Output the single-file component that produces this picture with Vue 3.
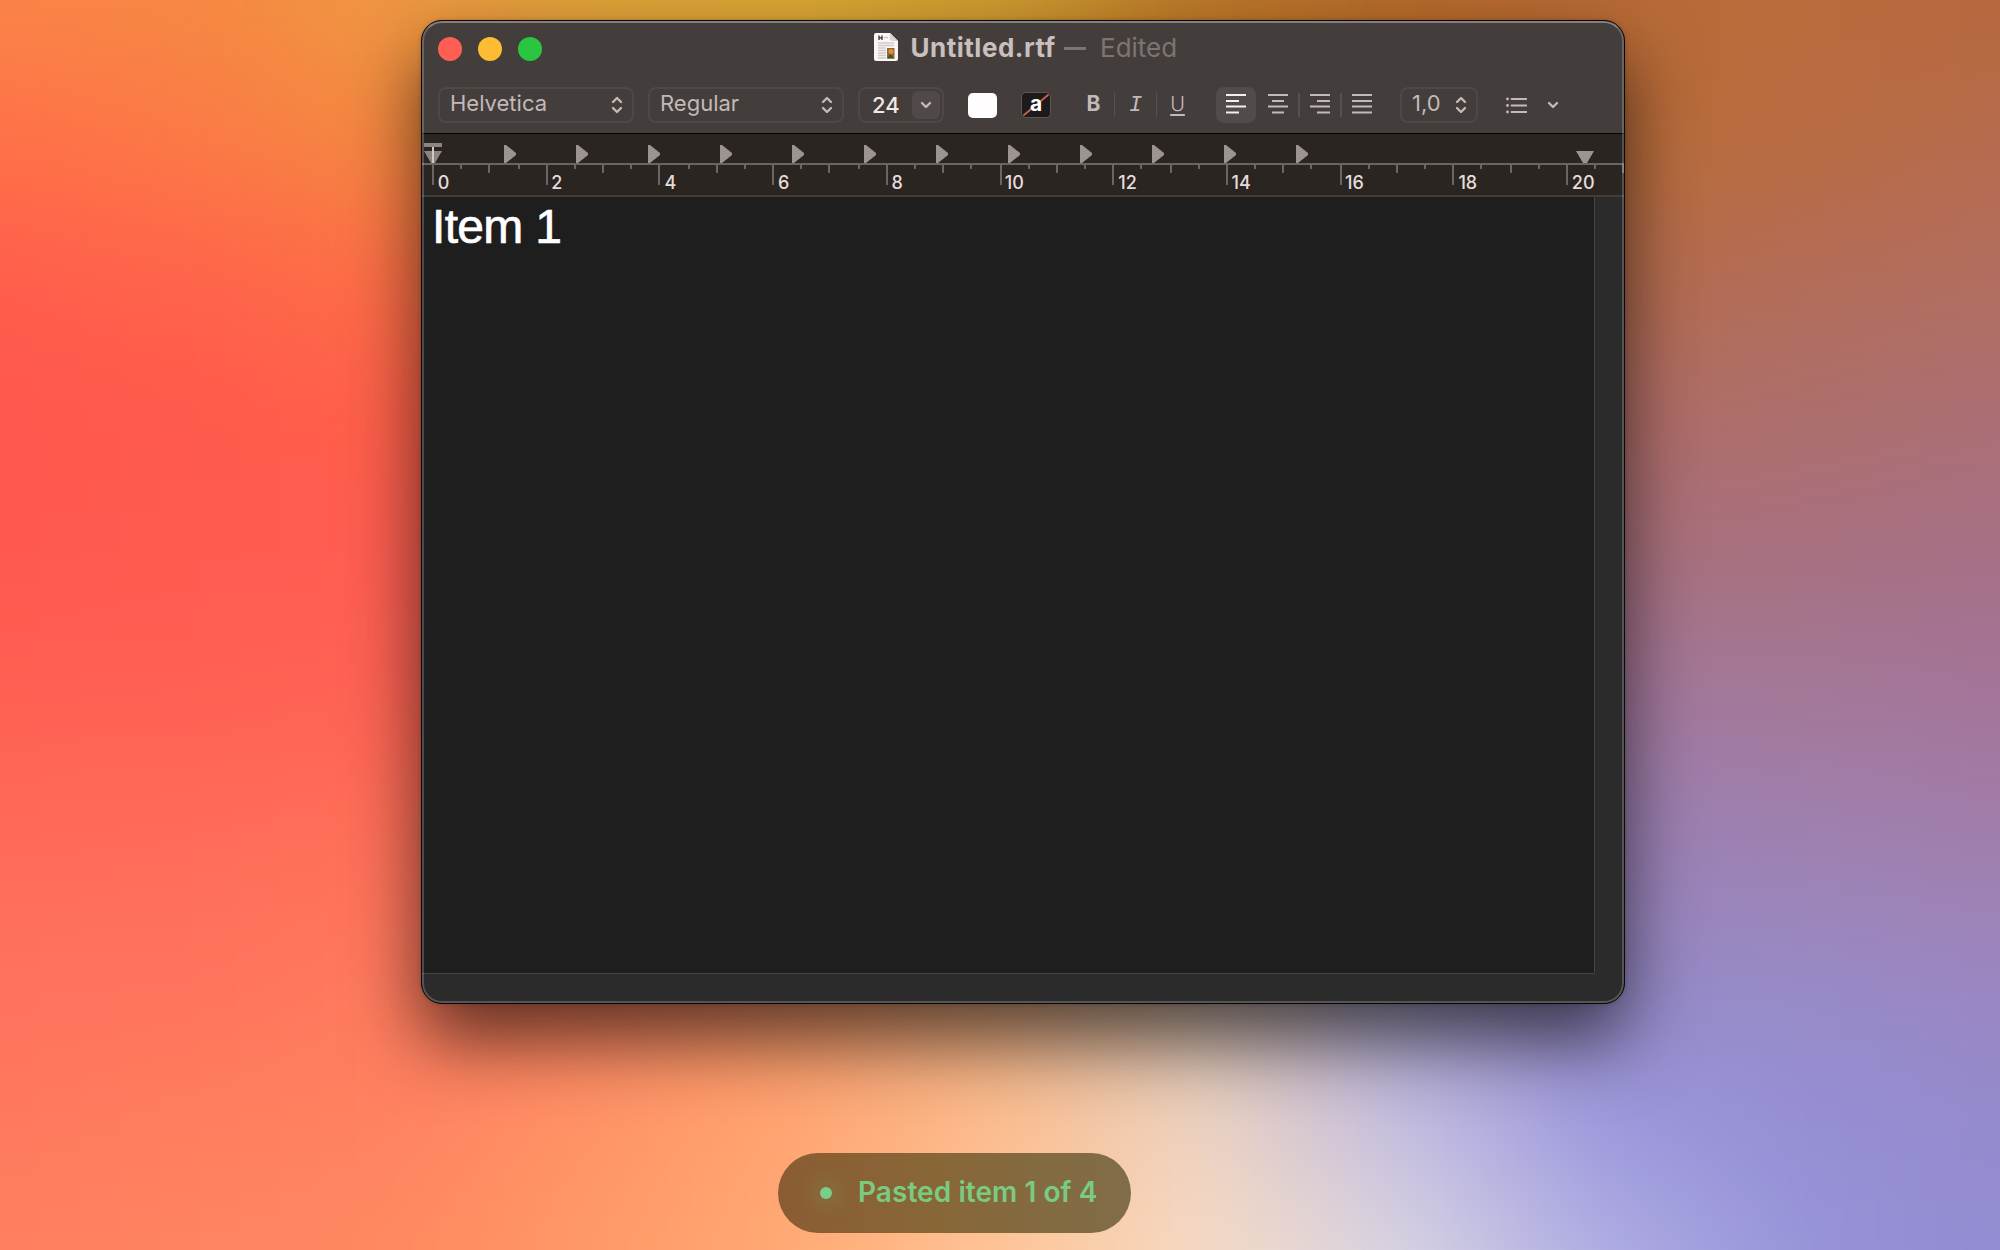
<script setup>
const mesh = [
  ['#fb8448', '#f58842', '#ef9842', '#dda338', '#dba634', '#cf9a30', '#bb7828', '#b66a2a', '#b86a34', '#b96b3c', '#b6693c'],
  ['#ff7048', '#fc7a46', '#f38840', '#e89a3c', '#dba833', '#cf9c2e', '#bb7828', '#b66a2c', '#b86c38', '#b86b40', '#b66b4e'],
  ['#ff5e4c', '#ff644a', '#fd6e46', '#e88a3c', '#d0a040', '#cf9c2e', '#bb7828', '#b66a2c', '#b46c4c', '#b36c58', '#b26e60'],
  ['#ff574e', '#ff5a4c', '#ff6049', '#f07848', '#d09050', '#c09050', '#b08050', '#b07050', '#b06c66', '#ad6f6c', '#ab6e74'],
  ['#ff594f', '#ff5c50', '#ff5d52', '#f07050', '#d09060', '#c09070', '#b08070', '#b07078', '#a8707c', '#a77080', '#a67086'],
  ['#ff6052', '#ff6053', '#ff6354', '#f87454', '#e08860', '#d09078', '#b88888', '#a88090', '#a2789c', '#a37898', '#a4749a'],
  ['#ff6a58', '#ff6c58', '#ff7058', '#ff7a58', '#f09068', '#e0a080', '#c0a090', '#a890a0', '#9a80b4', '#9f80b0', '#a07eaa'],
  ['#ff725c', '#ff735c', '#ff7a5e', '#ff8260', '#fa9868', '#e8ac80', '#d0b8a8', '#a8a0c8', '#9588c4', '#988ac4', '#9b85c0'],
  ['#ff785e', '#ff7d5e', '#ff8260', '#ff9366', '#ffa572', '#fcbc8e', '#ecd2c0', '#c2bce0', '#9a96dc', '#948ed4', '#958acc'],
  ['#ff7f60', '#ff8460', '#ff8a60', '#ff9a68', '#ffab76', '#fec598', '#f6dac4', '#d8d4e2', '#b0aee4', '#9894da', '#918cd2'],
]
const rgb = (hex) => [1, 3, 5].map((k) => parseInt(hex.slice(k, k + 2), 16))
const mix = (a, b, t) => a.map((v, k) => v + (b[k] - v) * t)
const colorAt = (u, v) => {
  const cu = Math.min(10, Math.max(0, u))
  const cv = Math.min(9, Math.max(0, v))
  const c = Math.min(9, Math.floor(cu))
  const r = Math.min(8, Math.floor(cv))
  const top = mix(rgb(mesh[r][c]), rgb(mesh[r][c + 1]), cu - c)
  const low = mix(rgb(mesh[r + 1][c]), rgb(mesh[r + 1][c + 1]), cu - c)
  return `rgb(${mix(top, low, cv - r).map(Math.round).join(',')})`
}
const cells = []
for (let y = -160; y < 1410; y += 40) {
  for (let x = -160; x < 2160; x += 40) {
    cells.push({ x, y, color: colorAt((x + 20) / 200, (y + 20) / 138.9) })
  }
}

const tabs = Array.from({ length: 12 }, (_, i) => 82 + i * 72)
const ticks = Array.from({ length: 43 }, (_, i) => ({
  x: 11 + 2 * Math.round(i * 14.1751),
  h: i % 4 === 0 ? 20 : i % 2 === 0 ? 8 : 4,
}))
const labels = Array.from({ length: 11 }, (_, i) => ({ text: String(i * 2), x: 15.8 + i * 113.4 }))
</script>

<template>
  <main class="desktop">
    <svg class="wallpaper" width="2000" height="1250" viewBox="0 0 2000 1250" aria-hidden="true">
      <defs>
        <filter id="soft" x="-160" y="-160" width="2320" height="1570" filterUnits="userSpaceOnUse" color-interpolation-filters="sRGB">
          <feGaussianBlur stdDeviation="34" />
        </filter>
      </defs>
      <g filter="url(#soft)">
        <rect v-for="(cell, i) in cells" :key="i" :x="cell.x" :y="cell.y" width="41" height="41" :fill="cell.color" />
      </g>
    </svg>

    <section class="window">
      <header class="chrome">
        <div class="titlebar">
          <div class="lights"><i class="red"></i><i class="amber"></i><i class="green"></i></div>
          <div class="title">
            <svg class="doc" width="24" height="28" viewBox="0 0 24 28" fill="none">
              <path d="M2 0H16L24 8V26Q24 28 22 28H2Q0 28 0 26V2Q0 0 2 0Z" fill="#faf6f6" />
              <path d="M16 0V6Q16 8 18 8H24Z" fill="#ddd5d5" />
              <path d="M5 2.500V7M8 2.500V7M5 4.800H8" stroke="#35302f" stroke-width="1.300" />
              <path d="M10 4.500H14M4 10H20M4 12.500H20M4 15H12M4 17.500H12M4 20H12M4 22.500H12M4 25H12" stroke="#d3c9ca" stroke-width="1.400" />
              <rect x="13" y="15" width="7.500" height="10.500" fill="#8b6a35" />
              <circle cx="17" cy="18.500" r="2.500" fill="#e98b35" />
              <path d="M13 25.500L16 21L20.500 25.500Z" fill="#43552c" />
            </svg>
            <strong>Untitled.rtf</strong><span class="dash"></span><span class="edited">Edited</span>
          </div>
        </div>
        <div class="toolbar">
          <div class="select wide"><span>Helvetica</span>
            <svg width="12" height="18" viewBox="0 0 12 18"><path d="M2 6L6 2L10 6M2 12L6 16L10 12" /></svg>
          </div>
          <div class="select wide second"><span>Regular</span>
            <svg width="12" height="18" viewBox="0 0 12 18"><path d="M2 6L6 2L10 6M2 12L6 16L10 12" /></svg>
          </div>
          <div class="select size"><span>24</span>
            <b class="drop"><svg width="12" height="8" viewBox="0 0 12 8"><path d="M2 2L6 6L10 2" /></svg></b>
          </div>
          <span class="swatch"></span>
          <span class="highlight">
            <svg width="28" height="24" viewBox="0 0 28 24"><path class="slash" d="M2 22L26 2" /></svg>
            <em>a</em>
          </span>
          <div class="styles">
            <span class="bold">B</span><i></i>
            <span class="italic">I</span><i></i>
            <span class="under">U</span>
          </div>
          <div class="aligns">
            <span class="active"><svg width="20" height="20" viewBox="0 0 20 20"><path d="M0 1H20M0 7H13M0 12.500H20M0 18.500H13" /></svg></span>
            <b></b>
            <span><svg width="20" height="20" viewBox="0 0 20 20"><path d="M0 1H20M4 7H16M0 12.500H20M4 18.500H16" /></svg></span>
            <b class="line"></b>
            <span><svg width="20" height="20" viewBox="0 0 20 20"><path d="M0 1H20M7 7H20M0 12.500H20M7 18.500H20" /></svg></span>
            <b class="line"></b>
            <span><svg width="20" height="20" viewBox="0 0 20 20"><path d="M0 1H20M0 7H20M0 12.500H20M0 18.500H20" /></svg></span>
          </div>
          <div class="select spacing"><span>1,0</span>
            <svg width="12" height="18" viewBox="0 0 12 18"><path d="M2 6L6 2L10 6M2 12L6 16L10 12" /></svg>
          </div>
          <svg class="list" width="21" height="18" viewBox="0 0 21 18">
            <path d="M5.500 3H20.500M5.500 9.500H20.500M5.500 16H20.500" />
            <circle cx="1.500" cy="3" r="1.400" /><circle cx="1.500" cy="9.500" r="1.400" /><circle cx="1.500" cy="16" r="1.400" />
          </svg>
          <svg class="more" width="12" height="8" viewBox="0 0 12 8"><path d="M2 2L6 6L10 2" /></svg>
        </div>
      </header>

      <svg class="ruler" width="1202" height="63" viewBox="0 0 1202 63">
        <path d="M0 30H1202" stroke="#6a6563" stroke-width="2" />
        <path d="M0 62H1202" stroke="#423d3b" stroke-width="2" />
        <rect v-for="(t, i) in ticks" :key="'k' + i" :x="t.x - 1" y="31" width="2" :height="t.h" fill="#6a6563" />
        <path v-for="x in tabs" :key="x" :d="`M${x} 11h2l10 8v2l-10 8h-2z`" fill="#9c9492" />
        <path d="M2 9H20V13H2ZM2 17H20L13 29H9Z" fill="#8d8583" />
        <path d="M11 13V29" stroke="#d2c6c7" stroke-width="2" />
        <path d="M1154 17H1172L1165 29H1161Z" fill="#9c9492" />
        <text v-for="l in labels" :key="l.text" :x="l.x" y="55">{{ l.text }}</text>
      </svg>

      <div class="body">
        <div class="page">Item 1</div>
        <div class="gutter"></div>
      </div>
      <footer class="bottom"></footer>
    </section>

    <div class="toast"><i></i><span>Pasted item 1 of 4</span></div>
  </main>
</template>

<style>
body { margin: 0; overflow: hidden; }
</style>

<style scoped>
.desktop {
  position: relative;
  box-sizing: border-box;
  width: 2000px;
  height: 1250px;
  padding-top: 20px;
  overflow: hidden;
  font-family: Inter, "Liberation Sans", sans-serif;
  background: #ff7a58;
}
.wallpaper { position: absolute; inset: 0; }
.window {
  position: relative;
  box-sizing: border-box;
  display: flex;
  flex-direction: column;
  width: 1204px;
  height: 984px;
  margin-left: 421px;
  border: 1px solid #0c0808;
  border-radius: 21px;
  overflow: hidden;
  background: #2b2b2b;
  box-shadow: 0 36px 72px rgba(0, 0, 0, .63), 0 0 4px rgba(0, 0, 0, .2);
}
.window::after {
  content: "";
  position: absolute;
  inset: 0;
  border: 2px solid rgba(255, 255, 255, .2);
  border-top-color: rgba(255, 240, 240, .36);
  border-radius: 20px;
}
.chrome {
  box-sizing: border-box;
  height: 113px;
  border-bottom: 1px solid #050303;
  background: #433e3b;
}
.titlebar { display: flex; height: 57px; }
.lights { display: flex; gap: 16px; padding: 16px 0 0 16px; }
.lights i { width: 24px; height: 24px; border-radius: 50%; }
.red { background: #ff5f52; }
.amber { background: #febc33; }
.green { background: #2ac642; }
.title { display: flex; align-items: center; height: 52px; margin-left: 332px; font-size: 26px; white-space: nowrap; }
.title strong { width: 144px; margin-left: 12.5px; font-weight: 700; letter-spacing: .5px; color: #cabfbf; }
.dash { width: 22px; height: 3px; margin: 3px 0 0 9.5px; background: #7e7473; }
.edited { margin-left: 14px; color: #7e7473; }
.toolbar { display: flex; align-items: center; height: 36px; margin-top: 9px; padding-left: 16px; color: #c3b9b9; }
.toolbar svg { stroke: #c3b9b9; stroke-width: 2.4; stroke-linecap: round; stroke-linejoin: round; fill: none; }
.select {
  box-sizing: border-box;
  display: flex;
  align-items: center;
  justify-content: space-between;
  height: 36px;
  border: 2px solid #4e4846;
  border-radius: 8px;
  padding: 0 9px 0 10px;
  font-size: 22px;
}
.select > span { line-height: 30px; margin-top: -5px; }
.wide { width: 196px; }
.second { margin-left: 14px; }
.size { width: 86px; margin-left: 14px; padding: 0 2px 0 12px; color: #f0e7e7; font-weight: 500; }
.size > span { margin-top: -1px; }
.drop { display: flex; align-items: center; justify-content: center; width: 28px; height: 28px; border-radius: 6px; background: #504947; }
.swatch { width: 29px; height: 25px; margin-left: 24px; border-radius: 5px; background: #fffdfd; }
.highlight { position: relative; box-sizing: border-box; width: 30px; height: 26px; margin-left: 24px; border: 1px solid #5c5654; border-radius: 5px; background: #1c1a1a; }
.highlight svg { display: block; }
.toolbar .slash { stroke: #c7634a; stroke-width: 1.8; }
.highlight em { position: absolute; inset: 0; font: 700 21px/22px Inter, sans-serif; text-align: center; color: #fff; }
.styles { display: flex; align-items: center; margin-left: 22px; height: 36px; }
.styles span { width: 41px; text-align: center; line-height: 30px; margin-top: -3px; }
.styles i, .aligns .line { width: 1px; height: 24px; background: #575150; }
.bold { font-size: 21px; font-weight: 700; }
.styles .italic { margin-top: 0; font: italic 22px "Liberation Mono", monospace; }
.under { font-size: 20px; font-weight: 300; text-decoration: underline; text-decoration-thickness: 1.5px; text-underline-offset: 3px; }
.aligns { display: flex; align-items: center; margin-left: 18px; }
.aligns span { display: flex; align-items: center; justify-content: center; width: 40px; height: 36px; border-radius: 8px; }
.aligns svg { stroke-width: 1.8; stroke-linecap: butt; margin-top: -2px; }
.aligns b { width: 2px; }
.aligns span + b.line { width: 2px; }
.aligns .active { background: #514b49; }
.active svg { stroke: #f5eeee; }
.spacing { width: 78px; margin-left: 18px; padding: 0 9px 0 10px; }
.toolbar .list { margin-left: 28px; stroke-width: 1.8; }
.list circle { fill: #c3b9b9; stroke: none; }
.toolbar .more { margin-left: 20px; }
.ruler { display: block; flex: none; background: #2b2522; }
.ruler text { font: 500 18px Inter, sans-serif; fill: #e6dcdc; }
.body { display: flex; height: 776px; background: #1e1e1e; }
.page {
  box-sizing: border-box;
  width: 1172px;
  padding: 2px 0 0 10px;
  font: 48px/56px "Liberation Sans", sans-serif;
  letter-spacing: -.7px;
  -webkit-text-stroke: .7px #fff;
  color: #fff;
}
.gutter { box-sizing: border-box; flex: 1; border-left: 1px solid #464444; background: #2b2b2b; }
.bottom { width: 1172px; height: 1px; background: #464444; }
.toast {
  position: absolute;
  left: 778px;
  top: 1153px;
  box-sizing: border-box;
  display: flex;
  align-items: center;
  width: 353px;
  height: 80px;
  padding-left: 42px;
  border-radius: 40px;
  background: linear-gradient(90deg, #8b5c33, #886737 45%, #806d49);
  color: #7acb82;
}
.toast i { width: 12px; height: 12px; border-radius: 50%; background: #7ace8b; box-shadow: 0 0 22px 8px rgba(122, 190, 120, .2); }
.toast span { margin: -2px 0 0 26px; font-size: 28px; font-weight: 600; letter-spacing: .06px; white-space: nowrap; }
</style>
